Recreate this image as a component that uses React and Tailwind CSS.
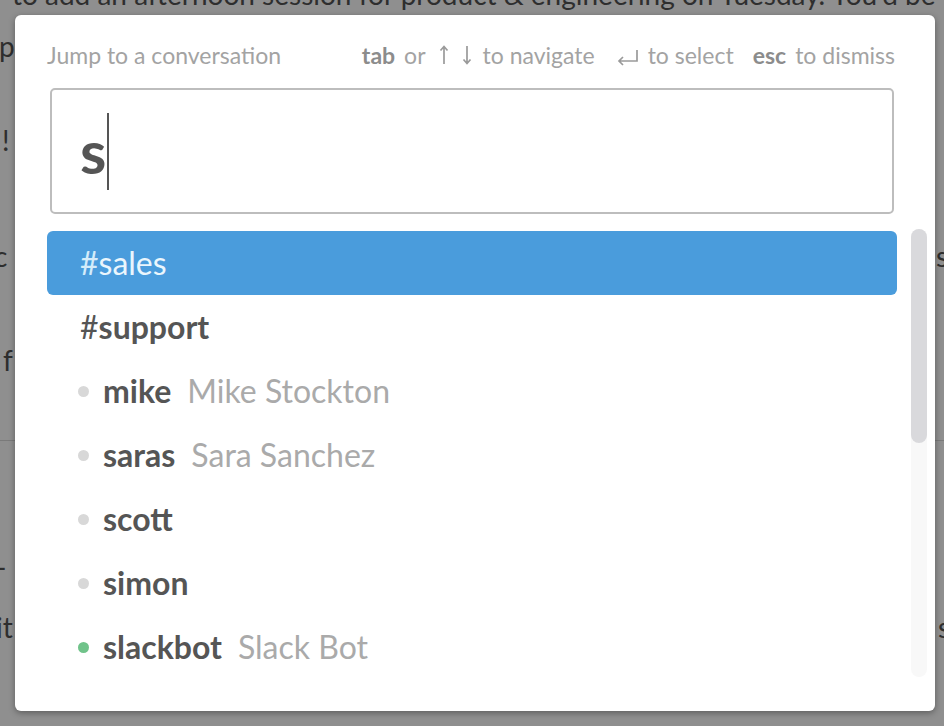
import React from 'react';

const rows = [
  { kind: 'channel', name: 'support' },
  { kind: 'user', name: 'mike', full: 'Mike Stockton' },
  { kind: 'user', name: 'saras', full: 'Sara Sanchez' },
  { kind: 'user', name: 'scott' },
  { kind: 'user', name: 'simon' },
  { kind: 'user', name: 'slackbot', full: 'Slack Bot', online: true },
];

function UpArrow() {
  return (
    <svg width="10" height="20" viewBox="0 0 10 20" className="inline-block">
      <path d="M5 19V2M1.5 5.5L5 1.5l3.5 4" fill="none" stroke="#9a9a9a" strokeWidth="1.7" />
    </svg>
  );
}

function DownArrow() {
  return (
    <svg width="10" height="20" viewBox="0 0 10 20" className="inline-block">
      <path d="M5 1v17M1.5 14.5L5 18.5l3.5-4" fill="none" stroke="#9a9a9a" strokeWidth="1.7" />
    </svg>
  );
}

function ReturnArrow() {
  return (
    <svg width="22" height="18" viewBox="0 0 22 18" className="inline-block">
      <path d="M20 1v11H2M6 8l-4 4 4 4" fill="none" stroke="#9a9a9a" strokeWidth="1.7" />
    </svg>
  );
}

function Background() {
  return (
    <div className="h-[726px] w-[944px] overflow-hidden bg-[#8f8f8f] text-[28px] leading-[32px] text-[#2e2e2e]">
      <div className="-mt-[22px] whitespace-nowrap pl-[12px]">
        to add an afternoon session for product &amp; engineering on Tuesday. You'd be
      </div>
      <div className="mt-[20px] whitespace-nowrap -ml-[1px]">p</div>
      <div className="mt-[62px] whitespace-nowrap pl-[2px]">!</div>
      <div className="mt-[84px] flex justify-between whitespace-nowrap -ml-[6px] -mr-[4px]">
        <span>c</span>
        <span>s</span>
      </div>
      <div className="mt-[72px] whitespace-nowrap pl-[3px]">f</div>
      <div className="mt-[64px] border-t border-[#7a7a7a]" />
      <div className="mt-[110px] whitespace-nowrap -ml-[4px]">-</div>
      <div className="mt-[28px] flex justify-between whitespace-nowrap -ml-[4px] -mr-[6px]">
        <span>it</span>
        <span>s</span>
      </div>
    </div>
  );
}

export default function App() {
  return (
    <div className="relative h-[726px] w-[944px] overflow-hidden" style={{ fontFamily: 'Lato, "Open Sans", sans-serif' }}>
      <Background />
      <div className="absolute inset-0 p-[15px]">
        <div className="flex h-[696px] w-[920px] flex-col rounded-[6px] bg-white pl-[32px] pr-[8px] pt-[26px] shadow-[0_2px_6px_rgba(0,0,0,0.35)]">
          <div className="flex w-[848px] items-center justify-between text-[23px] leading-[28px] text-[#a3a3a3]">
            <span>Jump to a conversation</span>
            <div className="flex items-center">
              <span className="font-bold text-[#8c8c8c]">tab</span>
              <span className="ml-[9px]">or</span>
              <span className="ml-[13px] flex items-center gap-[13px]">
                <UpArrow />
                <DownArrow />
              </span>
              <span className="ml-[11px]">to navigate</span>
              <span className="ml-[22px]">
                <ReturnArrow />
              </span>
              <span className="ml-[9px]">to select</span>
              <span className="ml-[19px] font-bold text-[#8c8c8c]">esc</span>
              <span className="ml-[9px]">to dismiss</span>
            </div>
          </div>

          <div className="ml-[3px] mt-[19px] flex h-[126px] w-[844px] items-center rounded-[5px] border-2 border-[#bdbdbd] pl-[28px]">
            <span className="text-[60px] font-bold leading-none text-[#555555]">s</span>
            <span className="ml-[1px] h-[77px] w-[2px] bg-[#555555]" />
          </div>

          <div className="mt-[15px] flex">
            <div className="w-[850px]">
              <div className="mt-[2px] flex h-[64px] items-center rounded-[6px] bg-[#4a9cdc] pl-[33px] text-[32px] text-[#eaf6fd]">
                <span className="text-[#d4ecfa]">#</span>
                <span>sales</span>
              </div>
              {rows.map((r) => (
                <div key={r.name} className="flex h-[64px] items-center pl-[31px] text-[32px]">
                  {r.kind === 'channel' ? (
                    <span className="ml-[2px] font-bold text-[#555555]">
                      <span className="font-normal">#</span>
                      {r.name}
                    </span>
                  ) : (
                    <>
                      <span
                        className={`h-[11px] w-[11px] rounded-full ${r.online ? 'bg-[#70c38a]' : 'bg-[#d8d8d8]'}`}
                      />
                      <span className="ml-[14px] font-bold text-[#555555]">{r.name}</span>
                      {r.full && <span className="ml-[16px] text-[#aaaaaa]">{r.full}</span>}
                    </>
                  )}
                </div>
              ))}
            </div>
            <div className="ml-[14px] flex h-[448px] w-[16px] flex-col rounded-full bg-[#f8f8f8]">
              <div className="h-[214px] w-full rounded-full bg-[#d9d9dc]" />
            </div>
          </div>
        </div>
      </div>
    </div>
  );
}
